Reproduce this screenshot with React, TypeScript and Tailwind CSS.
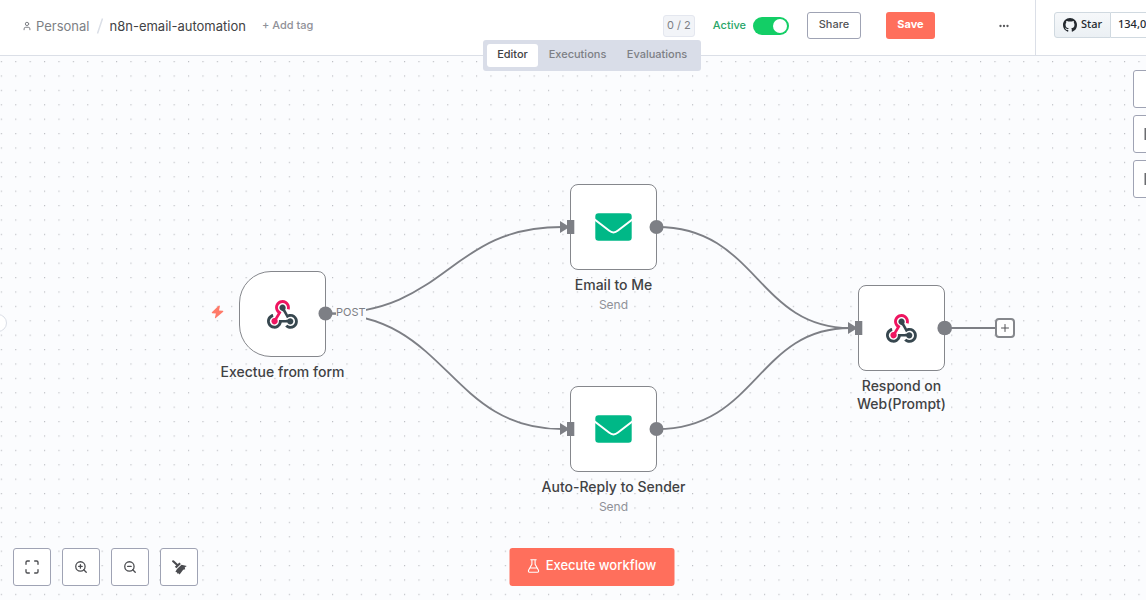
import { Maximize, MoreHorizontal, Plus, User, ZoomIn, ZoomOut } from "lucide-react";
import type { ReactNode } from "react";

const WebhookIcon = () => (
  <svg viewBox="0 0 256 240" className="h-[29px] w-[31px]" aria-hidden="true">
    <path
      fill="#ee1560"
      d="M119.54 100.503c-10.61 17.836-20.775 35.108-31.152 52.25c-2.665 4.401-3.984 7.986-1.855 13.58c5.878 15.454-2.414 30.493-17.998 34.575c-14.697 3.851-29.016-5.808-31.932-21.543c-2.584-13.927 8.224-27.58 23.58-29.757c1.286-.184 2.6-.205 4.762-.367l23.358-39.168C73.612 95.465 64.868 78.39 66.803 57.23c1.368-14.957 7.25-27.883 18-38.477c20.59-20.288 52.002-23.573 76.246-8.001c23.284 14.958 33.948 44.094 24.858 69.031c-6.854-1.858-13.756-3.732-21.343-5.79c2.854-13.865.743-26.315-8.608-36.981c-6.178-7.042-14.106-10.733-23.12-12.093c-18.072-2.73-35.815 8.88-41.08 26.618c-5.976 20.13 3.069 36.575 27.784 48.967"
    />
    <path
      fill="#37474f"
      d="M149.841 79.41c7.475 13.187 15.065 26.573 22.587 39.836c38.02-11.763 66.686 9.284 76.97 31.817c12.422 27.219 3.93 59.457-20.465 76.25c-25.04 17.238-56.707 14.293-78.892-7.851c5.654-4.733 11.336-9.487 17.407-14.566c21.912 14.192 41.077 13.524 55.305-3.282c12.133-14.337 11.87-35.714-.615-49.75c-14.408-16.197-33.707-16.691-57.035-1.143c-9.677-17.168-19.522-34.199-28.893-51.491c-3.16-5.828-6.648-9.21-13.77-10.443c-11.893-2.062-19.571-12.275-20.032-23.717c-.453-11.316 6.214-21.545 16.634-25.53c10.322-3.949 22.435-.762 29.378 8.014c5.674 7.17 7.477 15.24 4.491 24.083c-.83 2.466-1.905 4.852-3.07 7.774"
    />
    <path
      fill="#37474f"
      d="M167.707 187.21h-45.77c-4.387 18.044-13.863 32.612-30.19 41.876c-12.693 7.2-26.373 9.641-40.933 7.29c-26.808-4.323-48.728-28.456-50.658-55.63c-2.184-30.784 18.975-58.147 47.178-64.293c1.947 7.071 3.915 14.21 5.862 21.264c-25.876 13.202-34.832 29.836-27.59 50.636c6.375 18.304 24.484 28.337 44.147 24.457c20.08-3.962 30.204-20.65 28.968-47.432c19.036 0 38.088-.197 57.126.097c7.434.117 13.173-.654 18.773-7.208c9.22-10.784 26.191-9.811 36.121.374c10.148 10.409 9.662 27.157-1.077 37.127c-10.361 9.62-26.73 9.106-36.424-1.26c-1.992-2.136-3.562-4.673-5.533-7.298"
    />
  </svg>
);

const EnvelopeIcon = () => (
  <svg viewBox="0 0 37 28" className="h-7 w-[37px]" aria-hidden="true">
    <rect x="0.3" y="0.3" width="36.4" height="27.4" rx="3.2" fill="#00b887" />
    <path d="M-1 6 L14 17.6 Q18.5 21.4 23 17.6 L38 6" fill="none" stroke="#fff" strokeWidth="1.9" />
  </svg>
);

const BoltIcon = () => (
  <svg viewBox="0 0 13 14" className="h-3.5 w-[13px]" aria-hidden="true">
    <path
      d="M7.6 .8 L.9 7.3 Q.5 8.1 1.3 8.3 L4.9 8.5 L3.9 12.7 Q4 13.5 4.8 13.1 L12.2 6.7 Q12.6 5.9 11.8 5.7 L8 5.4 L8.9 1.3 Q8.6 .1 7.6 .8Z"
      fill="#ff7a69"
    />
  </svg>
);

const BroomIcon = () => (
  <svg viewBox="0 0 15 15" className="size-[15px]" aria-hidden="true">
    <path d="M1.2 1.3 L5 4.8" stroke="#4b4c50" strokeWidth="2.2" strokeLinecap="round" />
    <path d="M7.4 2.4 L8.9 4 L4.4 8.3 L2.8 6.8 Z" fill="#4b4c50" />
    <path d="M9.5 4.7 L14.8 6 L12.7 7.6 L13.2 9.2 L11.2 9.8 L7.6 14.6 L6.3 13.2 L5.3 13.8 L5 12.2 L3.4 12 L5 9 Z" fill="#4b4c50" />
  </svg>
);

const FlaskIcon = () => (
  <svg
    viewBox="0 0 12 14"
    className="h-3.5 w-3"
    fill="none"
    stroke="currentColor"
    strokeWidth="1.1"
    strokeLinecap="round"
    strokeLinejoin="round"
    aria-hidden="true"
  >
    <path d="M3.3 .8h5.4M4.4 .8v4.4L.9 11.6Q.6 13.2 2 13.2h8q1.4 0 1.1-1.6L7.6 5.2V.8M2.5 9h7" />
  </svg>
);

const GithubIcon = () => (
  <svg viewBox="0 0 16 16" className="size-3.5" fill="#24292f" aria-hidden="true">
    <path d="M8 0c4.42 0 8 3.58 8 8a8.013 8.013 0 0 1-5.45 7.59c-.4.08-.55-.17-.55-.38 0-.27.01-1.13.01-2.2 0-.75-.25-1.23-.54-1.48 1.78-.2 3.65-.88 3.65-3.95 0-.88-.31-1.59-.82-2.15.08-.2.36-1.02-.08-2.12 0 0-.67-.22-2.2.82-.64-.18-1.32-.27-2-.27-.68 0-1.36.09-2 .27-1.53-1.03-2.2-.82-2.2-.82-.44 1.1-.16 1.92-.08 2.12-.51.56-.82 1.28-.82 2.15 0 3.06 1.86 3.75 3.64 3.95-.23.2-.44.55-.51 1.07-.46.21-1.61.55-2.33-.66-.15-.24-.6-.83-1.23-.82-.67.01-.27.38.01.53.34.19.73.9.82 1.13.16.45.68 1.31 2.69.94 0 .67.01 1.3.01 1.49 0 .21-.15.45-.55.38A7.995 7.995 0 0 1 0 8c0-4.42 3.58-8 8-8Z" />
  </svg>
);

const NoteIcon = () => (
  <svg viewBox="0 0 16 16" className="size-4" fill="none" stroke="#6b6c70" strokeWidth="2" aria-hidden="true">
    <path d="M1.500 3h13v7l-4 3h-9zM15 9h-5v4" />
  </svg>
);

const PanelIcon = () => (
  <svg viewBox="0 0 16 16" className="size-4" fill="none" stroke="#6b6c70" strokeWidth="2" aria-hidden="true">
    <path d="M1.500 3h13v10h-13zM10 3v10" />
  </svg>
);

type SquareButtonProps = { label: string; children: ReactNode };

const SquareButton = ({ label, children }: SquareButtonProps) => (
  <button
    type="button"
    aria-label={label}
    className="flex size-[38px] items-center justify-center rounded-[3px] border border-[#9fa3b4] bg-white text-[#4b4c50]"
  >
    {children}
  </button>
);

type NodeProps = {
  title: string;
  subtitle?: string;
  place: string;
  trigger?: boolean;
  width?: string;
  children: ReactNode;
};

const WorkflowNode = ({ title, subtitle, place, trigger, width = "w-[193px]", children }: NodeProps) => (
  <div className={`absolute flex flex-col items-center text-center ${width} ${place}`}>
    <div
      className={`flex h-[86px] w-[87px] items-center justify-center border border-[#85878c] bg-white ${
        trigger ? "rounded-l-[32px] rounded-r-lg" : "rounded-lg"
      }`}
    >
      {children}
    </div>
    <div className="mt-1.5 text-sm leading-[18px] font-medium text-[#414244]">{title}</div>
    {subtitle && <div className="mt-[3px] text-xs leading-4 text-[#8f9198]">{subtitle}</div>}
  </div>
);

const Wires = () => (
  <svg className="absolute inset-0 size-full" aria-hidden="true">
    <defs>
      <pattern id="dots" x="0.8" y="5" width="14.4" height="14.4" patternUnits="userSpaceOnUse">
        <circle cx="0.6" cy="0.6" r="0.6" fill="#aeb0b5" />
      </pattern>
    </defs>
    <rect width="100%" height="100%" fill="url(#dots)" />
    <g fill="none" stroke="#7d7f85" strokeWidth="1.8">
      <path d="M326 257.500C448 257.500 448 171 562 171" />
      <path d="M326 257.500C448 257.500 448 373 562 373" />
      <path d="M657 171C757 171 757 272 850 272" />
      <path d="M657 373C757 373 757 272 850 272" />
      <path d="M945 272H995" />
    </g>
  </svg>
);

const Ports = () => (
  <svg className="pointer-events-none absolute inset-0 size-full" fill="#7d7f85" aria-hidden="true">
    <circle cx="325.500" cy="257.500" r="7" />
    <circle cx="656.500" cy="171" r="7" />
    <circle cx="656.500" cy="373" r="7" />
    <circle cx="944.700" cy="272" r="7.300" />
    <path d="M560 165l8 5v2l-8 5zM560 367l8 5v2l-8 5zM848 266l8 5v2l-8 5z" />
    <path d="M567 164h7.300v14H567zM567 366h7.300v14H567zM855 265h7.300v14H855z" />
  </svg>
);

export default function App() {
  return (
    <div className="h-screen overflow-hidden bg-[#fbfcfe] font-['Inter',sans-serif]">
      <div className="flex h-full w-[calc(100%+38px)] flex-col">
        <header className="relative z-10 flex h-14 shrink-0 border-b border-[#dbdfe7] bg-white">
          <div className="flex min-w-0 flex-1 items-center pb-1">
            <nav className="flex items-center pl-[22px] text-[13px] leading-5" aria-label="Breadcrumb">
              <a href="#personal" className="flex items-center gap-1 text-[#7d7f85]">
                <User size={10} strokeWidth={2.4} />
                Personal
              </a>
              <svg viewBox="0 0 8 16" className="mx-1.5 h-4 w-2" aria-hidden="true">
                <path d="M6.500 .5 1.500 15.500" stroke="#dbdfe7" strokeWidth="1.500" />
              </svg>
              <h1 className="text-[#414244]">n8n-email-automation</h1>
            </nav>
            <button type="button" className="ml-4 text-[11px] font-medium text-[#8f9198]">
              + Add tag
            </button>
            <div className="ml-auto flex items-center">
              <span className="flex h-[22px] w-8 items-center justify-center rounded-[3px] border border-[#e4e7ef] bg-[#f2f4f8] text-[11px] text-[#7d7f85]">
                0 / 2
              </span>
              <label htmlFor="active" className="ml-[18px] text-[11px] font-medium text-[#29a568]">
                Active
              </label>
              <span className="relative ml-[7px] h-[18px] w-9">
                <input
                  id="active"
                  type="checkbox"
                  role="switch"
                  defaultChecked
                  className="peer size-full appearance-none rounded-full bg-[#b4b8c5] checked:bg-[#13ce66]"
                />
                <span className="pointer-events-none absolute top-0.5 left-0.5 size-3.5 rounded-full bg-white peer-checked:left-5" />
              </span>
              <button
                type="button"
                className="ml-[18px] flex h-[27px] w-[54px] items-center justify-center rounded-[3px] border border-[#9fa3b4] bg-white pb-0.5 text-[11px] font-medium text-[#525356]"
              >
                Share
              </button>
              <button
                type="button"
                className="ml-[25px] flex h-[27px] w-[49px] items-center justify-center rounded-[3px] bg-[#ff6f5c] pb-0.5 text-[11px] font-bold text-white"
              >
                Save
              </button>
              <button type="button" aria-label="More actions" className="mr-[25px] ml-[63px] text-[#525356]">
                <MoreHorizontal size={12} strokeWidth={2.6} />
              </button>
            </div>
          </div>
          <div className="flex w-[149px] items-center border-l border-[#dbdfe7] pb-1.5 pl-[18px] font-['Noto_Sans',sans-serif] text-[11px] font-medium text-[#24292f]">
            <a
              href="#star"
              className="flex h-[26px] w-[57px] shrink-0 items-center justify-center gap-1 rounded-l-[3px] border border-[#d0d9e0] bg-linear-to-b from-[#f6f8fa] to-[#ebf0f4]"
            >
              <GithubIcon />
              Star
            </a>
            <a href="#stars" className="flex h-[26px] flex-1 items-center border-y border-[#d0d9e0] bg-white pl-[7px]">
              134,0
            </a>
          </div>
          <div
            role="tablist"
            className="absolute top-10 left-1/2 flex -translate-x-1/2 rounded-[3px] bg-[#d9dde8] p-1 text-[11px] font-medium text-[#7d7f85]"
          >
            <button
              type="button"
              role="tab"
              aria-selected="true"
              className="h-[23px] w-[51px] rounded-[3px] bg-white pb-0.5 text-[#414244]"
            >
              Editor
            </button>
            <button type="button" role="tab" aria-selected="false" className="h-[23px] w-[79px] pb-0.5">
              Executions
            </button>
            <button type="button" role="tab" aria-selected="false" className="h-[23px] w-20 pb-0.5">
              Evaluations
            </button>
          </div>
        </header>

        <main className="relative flex-1 overflow-hidden">
          <Wires />
          <WorkflowNode title="Exectue from form" place="left-[186px] top-[215px]" trigger>
            <WebhookIcon />
          </WorkflowNode>
          <WorkflowNode title="Email to Me" subtitle="Send" place="left-[517px] top-[128px]">
            <EnvelopeIcon />
          </WorkflowNode>
          <WorkflowNode title="Auto-Reply to Sender" subtitle="Send" place="left-[517px] top-[330px]">
            <EnvelopeIcon />
          </WorkflowNode>
          <WorkflowNode title="Respond on Web(Prompt)" place="left-[845px] top-[229px]" width="w-[113px]">
            <WebhookIcon />
          </WorkflowNode>
          <Ports />
          <span className="absolute top-[249px] left-[211px]">
            <BoltIcon />
          </span>
          <span className="absolute top-[249px] left-[336px] bg-[#fbfcfe] text-[11px] leading-[15px] text-[#7d7f85]">POST</span>
          <button
            type="button"
            aria-label="Add node"
            className="absolute top-[262px] left-[995px] flex size-5 items-center justify-center rounded-[4px] border-2 border-[#85878c] bg-white text-[#525356]"
          >
            <Plus size={12} strokeWidth={2} />
          </button>
          <button
            type="button"
            aria-label="Expand sidebar"
            className="absolute top-[258px] -left-[11px] size-[18px] rounded-full border border-[#dbdfe7] bg-white"
          />

          <div className="absolute top-3.5 right-[13px] flex flex-col gap-[7px]">
            <SquareButton label="Add node to canvas">
              <Plus size={14} />
            </SquareButton>
            <SquareButton label="Add note">
              <NoteIcon />
            </SquareButton>
            <SquareButton label="Toggle panel">
              <PanelIcon />
            </SquareButton>
          </div>

          <div className="absolute bottom-3.5 left-[13px] flex gap-[11px]">
            <SquareButton label="Fit view">
              <Maximize size={16} strokeWidth={2} />
            </SquareButton>
            <SquareButton label="Zoom in">
              <ZoomIn size={14} strokeWidth={2.2} />
            </SquareButton>
            <SquareButton label="Zoom out">
              <ZoomOut size={14} strokeWidth={2.2} />
            </SquareButton>
            <SquareButton label="Tidy up">
              <BroomIcon />
            </SquareButton>
          </div>

          <button
            type="button"
            className="absolute bottom-3.5 left-1/2 flex h-[38px] w-[165px] -translate-x-1/2 items-center justify-center gap-1.5 rounded-[3px] bg-[#ff6f5c] pb-0.5 text-[13px] font-medium text-white"
          >
            <FlaskIcon />
            Execute workflow
          </button>
        </main>
      </div>
    </div>
  );
}
